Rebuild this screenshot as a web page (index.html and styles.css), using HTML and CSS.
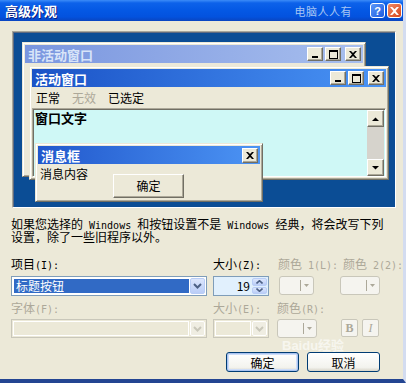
FILE: index.html
```html
<!DOCTYPE html>
<html lang="zh-CN">

<head>
    <meta charset="UTF-8">
    <title>高级外观</title>
    <link rel="stylesheet" href="styles.css">
</head>

<body>

    <div class="window">
        <div class="titlebar">
            <span class="title">高级外观</span>
            <span class="watermark">电脑人人有</span>
            <span class="cap-btn help">?</span>
            <span class="cap-btn close">
                <svg width="9" height="8" viewBox="0 0 8 7"><path d="M0 0h2l2 2 2-2h2L5 3.5 8 7H6L4 5 2 7H0l3-3.5z" fill="#fff"/></svg>
            </span>
        </div>

        <div class="dialog">
            <!-- preview of the scheme: overlapping sample windows -->
            <div class="preview">
                <div class="pwin inactive">
                    <div class="pbar">
                        <span>非活动窗口</span>
                        <span class="pbtns">
                            <span class="cbtn"><svg width="8" height="7"><rect x="1" y="5" width="6" height="2"/></svg></span>
                            <span class="cbtn"><svg width="9" height="9"><path d="M0 0h9v9H0zM1 2v6h7V2z" fill-rule="evenodd"/></svg></span>
                            <span class="cbtn gap"><svg width="8" height="7"><path d="M0 0h2l2 2 2-2h2L5 3.5 8 7H6L4 5 2 7H0l3-3.5z"/></svg></span>
                        </span>
                    </div>
                </div>

                <div class="pwin active">
                    <div class="pbar">
                        <span>活动窗口</span>
                        <span class="pbtns">
                            <span class="cbtn"><svg width="8" height="7"><rect x="1" y="5" width="6" height="2"/></svg></span>
                            <span class="cbtn"><svg width="9" height="9"><path d="M0 0h9v9H0zM1 2v6h7V2z" fill-rule="evenodd"/></svg></span>
                            <span class="cbtn gap"><svg width="8" height="7"><path d="M0 0h2l2 2 2-2h2L5 3.5 8 7H6L4 5 2 7H0l3-3.5z"/></svg></span>
                        </span>
                    </div>
                    <div class="menu">
                        <span>正常</span>
                        <span class="off">无效</span>
                        <span>已选定</span>
                    </div>
                    <div class="textarea">
                        <div class="text">窗口文字</div>
                        <div class="vscroll">
                            <span class="sbtn"><svg width="7" height="4"><path d="M0 4L3.5 0.5 7 4z"/></svg></span>
                            <span class="track"></span>
                            <span class="sbtn"><svg width="7" height="4"><path d="M0 0L3.5 3.5 7 0z"/></svg></span>
                        </div>
                    </div>
                </div>

                <div class="pwin msgbox">
                    <div class="pbar">
                        <span>消息框</span>
                        <span class="pbtns">
                            <span class="cbtn"><svg width="8" height="7"><path d="M0 0h2l2 2 2-2h2L5 3.5 8 7H6L4 5 2 7H0l3-3.5z"/></svg></span>
                        </span>
                    </div>
                    <div class="msg">
                        <span>消息内容</span>
                        <span class="pbutton">确定</span>
                    </div>
                </div>
            </div>

            <div class="note">
                <div class="line">如果您选择的<span class="latin"> Windows </span>和按钮设置不是<span class="latin"> Windows </span>经典，将会改写下列</div>
                <div class="line">设置，除了一些旧程序以外。</div>
            </div>

            <div class="fields">
                <label class="lbl">项目<span class="latin">(I):</span></label>
                <label class="lbl">大小<span class="latin">(Z):</span></label>
                <label class="lbl off c3">颜色<span class="latin"> 1(L):</span></label>
                <label class="lbl off c4">颜色<span class="latin"> 2(2):</span></label>

                <div class="combo">
                    <span class="val">标题按钮</span>
                    <span class="drop"><svg width="9" height="6"><path d="M1 1l3.5 3.5L8 1" stroke="#4D6185" stroke-width="2" fill="none"/></svg></span>
                </div>
                <div class="spin">
                    <span class="num">19</span>
                    <span class="arrows">
                        <span class="arr"><svg width="7" height="4"><path d="M0.5 3.5L3.5 0.7 6.5 3.5" stroke="#4D6185" stroke-width="1.6" fill="none"/></svg></span>
                        <span class="arr"><svg width="7" height="4"><path d="M0.5 0.5L3.5 3.3 6.5 0.5" stroke="#4D6185" stroke-width="1.6" fill="none"/></svg></span>
                    </span>
                </div>
                <div class="colorbtn c1"><span class="sep"></span><svg width="5" height="3"><path d="M0 0h5L2.5 3z"/></svg></div>
                <div class="colorbtn c2"><span class="sep"></span><svg width="5" height="3"><path d="M0 0h5L2.5 3z"/></svg></div>

                <label class="lbl second off">字体<span class="latin">(F):</span></label>
                <label class="lbl second off">大小<span class="latin">(E):</span></label>
                <label class="lbl second off">颜色<span class="latin">(R):</span></label>
                <span></span>

                <div class="combo disabled">
                    <span class="val"></span>
                    <span class="drop"><svg width="9" height="6"><path d="M1 1l3.5 3.5L8 1" stroke="#C9C7BA" stroke-width="2" fill="none"/></svg></span>
                </div>
                <div class="combo disabled small">
                    <span class="val"></span>
                    <span class="drop"><svg width="9" height="6"><path d="M1 1l3.5 3.5L8 1" stroke="#C9C7BA" stroke-width="2" fill="none"/></svg></span>
                </div>
                <div class="colorbtn c3"><span class="sep"></span><svg width="5" height="3"><path d="M0 0h5L2.5 3z"/></svg></div>
                <div class="styles">
                    <span class="fbtn bold">B</span>
                    <span class="fbtn italic">I</span>
                </div>
            </div>

            <div class="actions">
                <button class="xp-btn default">确定</button>
                <button class="xp-btn">取消</button>
            </div>

            <span class="baidu">Baidu经验</span>
        </div>
    </div>

</body>

</html>
```

FILE: styles.css
```css
:root {
    --face: #ECE9D8;
    --shadow: #ACA899;
    --dark: #716F64;
    --gray-text: #ACA899;
    --xp-border: #7F9DB9;
    --cjk: "Noto Sans CJK SC", sans-serif;
}

* {
    margin: 0;
    padding: 0;
    box-sizing: border-box;
}

body {
    width: 406px;
    height: 383px;
    overflow: hidden;
    background-color: var(--face);
    font-family: var(--cjk);
    font-size: 12px;
    color: #000;
}

.latin {
    font-family: "DejaVu Sans Mono", monospace;
    font-size: 10px;
}

.window {
    height: 383px;
    display: flex;
    flex-direction: column;
    border-right: 3px solid #D3DCF0;
    border-bottom: 4px solid #234592;
}

/* title bar */

.titlebar {
    height: 21px;
    display: flex;
    align-items: center;
    padding: 0 1px 0 5px;
    background: linear-gradient(#3C8CF8 0%, #0D62EA 14%, #0458E4 50%, #0352DE 80%, #0A45C0 100%);
}

.titlebar .title {
    color: #fff;
    font-weight: 700;
    font-size: 13px;
    text-shadow: 1px 1px #0A1E80;
}

.titlebar .watermark {
    margin-left: auto;
    margin-right: 18px;
    color: #A9C6F3;
    font-size: 11px;
    letter-spacing: 0.5px;
}

.cap-btn {
    width: 15px;
    height: 15px;
    border: 1px solid #fff;
    border-radius: 3px;
    display: flex;
    align-items: center;
    justify-content: center;
    color: #fff;
    font-family: "Liberation Sans", sans-serif;
    font-weight: 700;
    font-size: 11px;
}

.cap-btn.help {
    background: linear-gradient(135deg, #5B97F8, #1D5BE0);
}

.cap-btn.close {
    margin-left: 2px;
    background: linear-gradient(135deg, #EE8A67, #D6461B);
}

/* dialog body */

.dialog {
    position: relative;
    flex: 1;
    display: flex;
    flex-direction: column;
    padding: 10px 0 0 11px;
}

.preview {
    position: relative;
    width: 384px;
    height: 177px;
    margin-left: 1px;
    background-color: #0B4D95;
    border: 1px solid;
    border-color: #A7A69A #fff #fff #A7A69A;
    box-shadow: inset 1px 1px #5E6A80;
}

.pwin {
    position: absolute;
    display: flex;
    flex-direction: column;
    background-color: var(--face);
    border: 1px solid;
    border-color: var(--face) var(--dark) var(--dark) var(--face);
    box-shadow: inset 1px 1px #fff, inset -1px -1px var(--shadow);
    padding: 2px;
}

.pwin.inactive {
    left: 9px;
    top: 10px;
    width: 344px;
    height: 135px;
}

.pwin.active {
    left: 16px;
    top: 34px;
    width: 360px;
    height: 114px;
}

.pwin.msgbox {
    left: 22px;
    top: 111px;
    width: 228px;
    height: 59px;
}

.pbar {
    height: 18px;
    flex-shrink: 0;
    display: flex;
    align-items: center;
    padding: 0 2px 0 3px;
    color: #fff;
    font-weight: 700;
    font-size: 13px;
    background: linear-gradient(to right, #1A52C6, #4A95F6);
}

.inactive .pbar {
    color: #D8E4F8;
    background: linear-gradient(to right, #7A96DF, #A8BFEE);
}

.msgbox .pbar {
    background: linear-gradient(to right, #2158CC, #4C94F4);
}

.pbtns {
    margin-left: auto;
    display: flex;
    gap: 2px;
}

.cbtn {
    width: 16px;
    height: 14px;
    display: flex;
    align-items: center;
    justify-content: center;
    background-color: var(--face);
    border: 1px solid;
    border-color: #fff var(--dark) var(--dark) #fff;
    box-shadow: inset -1px -1px var(--shadow);
}

.cbtn.gap {
    margin-left: 2px;
}

.msgbox .cbtn {
    height: 15px;
}

.menu {
    height: 21px;
    flex-shrink: 0;
    display: flex;
    align-items: center;
    gap: 12px;
    padding-left: 4px;
}

.off {
    color: var(--gray-text);
}

.textarea {
    flex: 1;
    display: flex;
    background-color: #CFF8F6;
    border: 1px solid;
    border-color: var(--shadow) #fff #fff var(--shadow);
    box-shadow: inset 1px 1px var(--dark);
}

.textarea .text {
    flex: 1;
    padding: 1px 2px;
    line-height: 15px;
    font-weight: 700;
    font-size: 13px;
}

.vscroll {
    width: 17px;
    margin: 1px 1px 0 0;
    display: flex;
    flex-direction: column;
}

.sbtn {
    height: 17px;
    display: flex;
    align-items: center;
    justify-content: center;
    background-color: var(--face);
    border: 1px solid;
    border-color: #fff var(--dark) var(--dark) #fff;
    box-shadow: inset -1px -1px var(--shadow);
}

.vscroll .track {
    flex: 1;
    background-color: #D6D3CC;
}

.msg {
    display: flex;
    align-items: flex-start;
    padding: 3px 0 0 2px;
    line-height: 14px;
}

.pbutton {
    width: 71px;
    height: 24px;
    margin: 7px 0 0 25px;
    display: flex;
    align-items: center;
    justify-content: center;
    background-color: var(--face);
    border: 1px solid;
    border-color: #fff var(--dark) var(--dark) #fff;
    box-shadow: inset -1px -1px var(--shadow);
}

/* text and fields */

.note {
    margin-top: 10px;
    white-space: nowrap;
}

.note .line {
    height: 12px;
    line-height: 12px;
    margin-bottom: 1px;
}

.fields {
    margin-top: 13px;
    display: grid;
    grid-template-columns: 202px 64px 63px 1fr;
    align-items: start;
}

.lbl {
    display: block;
    height: 19px;
    line-height: 13px;
    white-space: nowrap;
}

.lbl.c3 {
    margin-left: 1px;
}

.lbl.c4 {
    margin-left: 3px;
}

.lbl.second {
    height: 23px;
    padding-top: 5px;
}

.combo {
    width: 196px;
    height: 20px;
    display: flex;
    padding: 1px;
    background-color: #fff;
    border: 1px solid var(--xp-border);
}

.combo .val {
    flex: 1;
    margin: 1px;
    padding-left: 2px;
    line-height: 14px;
    color: #fff;
    background-color: #316AC5;
}

.combo .drop {
    width: 15px;
    display: flex;
    align-items: center;
    justify-content: center;
    border: 1px solid #B9CDF6;
    border-radius: 2px;
    background: linear-gradient(#DCE6FC, #BACDF7);
}

.combo.disabled {
    height: 19px;
    background-color: var(--face);
    border-color: #C9C7BA;
}

.combo.disabled .val {
    margin: 0 1px 0 0;
    background-color: var(--face);
    border: 1px solid #fff;
}

.combo.disabled .drop {
    border-color: #fff;
    background: #EFEDE2;
}

.combo.small {
    width: 56px;
}

.spin {
    width: 56px;
    height: 20px;
    display: flex;
    padding: 1px;
    background-color: #E1F0FD;
    border: 1px solid var(--xp-border);
}

.spin .num {
    flex: 1;
    text-align: right;
    padding-right: 2px;
    line-height: 16px;
}

.spin .arrows {
    width: 15px;
    display: flex;
    flex-direction: column;
    gap: 1px;
}

.spin .arr {
    flex: 1;
    display: flex;
    align-items: center;
    justify-content: center;
    border: 1px solid #B9CDF6;
    border-radius: 2px;
    background: linear-gradient(#DCE6FC, #BACDF7);
}

.colorbtn {
    height: 19px;
    display: flex;
    align-items: center;
    justify-content: flex-end;
    padding-right: 4px;
    background-color: #F5F4EF;
    border: 1px solid #C9C7BA;
    border-radius: 3px;
    fill: #ACA899;
}

.colorbtn .sep {
    width: 1px;
    height: 11px;
    margin-right: 3px;
    background-color: #ACA899;
}

.colorbtn.c1 {
    width: 35px;
    margin-left: 2px;
}

.colorbtn.c2 {
    width: 40px;
}

.colorbtn.c3 {
    width: 40px;
}

.styles {
    display: flex;
    gap: 4px;
    margin-left: 1px;
}

.fbtn {
    width: 17px;
    height: 18px;
    display: flex;
    align-items: center;
    justify-content: center;
    color: var(--gray-text);
    background-color: #F5F4EF;
    border: 1px solid #C9C7BA;
    border-radius: 2px;
    font-family: "Liberation Serif", serif;
    font-size: 12px;
}

.fbtn.bold {
    font-weight: 700;
}

.fbtn.italic {
    font-style: italic;
}

/* OK / cancel */

.actions {
    margin: 14px 23px 0 0;
    display: flex;
    justify-content: flex-end;
    gap: 8px;
}

.xp-btn {
    width: 73px;
    height: 20px;
    font-family: var(--cjk);
    font-size: 12px;
    color: #000;
    border: 1px solid #003C74;
    border-radius: 3px;
    background: linear-gradient(#FFFFFF, #F3F3EE 80%, #D8D4C8);
}

.xp-btn.default {
    box-shadow: inset 0 0 0 1px #A9C3F0, inset 0 0 0 2px #CEDDF8;
}

/* faint site watermark in the gap above the buttons */

.baidu {
    position: absolute;
    left: 282px;
    top: 318px;
    font-family: "Liberation Sans", var(--cjk);
    font-weight: 700;
    font-size: 13px;
    line-height: 13px;
    color: rgba(255, 255, 255, 0.6);
    pointer-events: none;
}
```
